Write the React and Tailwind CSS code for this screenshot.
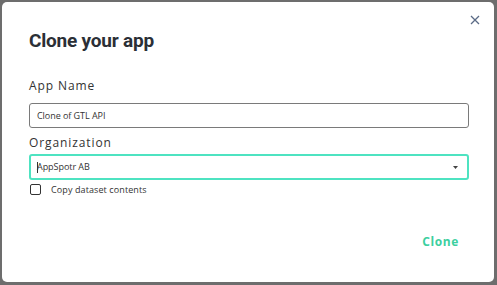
import React from "react";

export default function App() {
  return (
    <div className="w-[497px] h-[285px] bg-[#6d6d6d] pt-[2px] pl-[2px] pr-[3px] pb-[3px]">
      <div className="relative h-full w-full bg-white rounded-[5px] pl-[27px] pr-[25px] pt-[26px]" style={{ fontFamily: "'Open Sans', sans-serif" }}>
        <button className="absolute right-[13px] top-[12px] w-[12px] h-[12px] flex items-center justify-center">
          <svg width="10" height="10" viewBox="0 0 10 10">
            <path d="M1 1 L9 9 M9 1 L1 9" stroke="#5b6b86" strokeWidth="1.3" />
          </svg>
        </button>
        <h1 className="text-[19px] leading-[26px] font-bold text-[#2b2f36] tracking-[-0.2px]" style={{ fontFamily: "Roboto, sans-serif" }}>
          Clone your app
        </h1>
        <div className="mt-[24px] text-[12px] leading-[16px] tracking-[0.9px] text-[#333]">App Name</div>
        <div className="mt-[9px] h-[25px] border border-[#7a7a7a] rounded-[3px] flex items-center pl-[7px] text-[9px] text-[#333] tracking-[-0.05px]">
          Clone of GTL API
        </div>
        <div className="mt-[7px] text-[12px] leading-[16px] tracking-[0.9px] text-[#333]">Organization</div>
        <div className="mt-[3px] h-[26px] border-2 border-[#4ee3c1] rounded-[3px] flex items-center pl-[6px] pr-[9px] text-[9px] text-[#333] tracking-[-0.05px]">
          <span className="w-px h-[11px] bg-[#333] mr-[-1px]"></span>
          <span className="flex-1">AppSpotr AB</span>
          <svg width="5" height="3" viewBox="0 0 5 3">
            <path d="M0 0 L5 0 L2.5 3 Z" fill="#444" />
          </svg>
        </div>
        <label className="mt-[3px] flex items-center">
          <span className="w-[11px] h-[11px] border border-[#333] rounded-[2px] ml-[1px]"></span>
          <span className="ml-[10px] text-[9px] text-[#333] tracking-[0.1px]">Copy dataset contents</span>
        </label>
        <div className="flex justify-end mt-[36px] pr-[10px]">
          <button className="text-[12px] font-bold text-[#3ccf9f] tracking-[0.6px]">Clone</button>
        </div>
      </div>
    </div>
  );
}
